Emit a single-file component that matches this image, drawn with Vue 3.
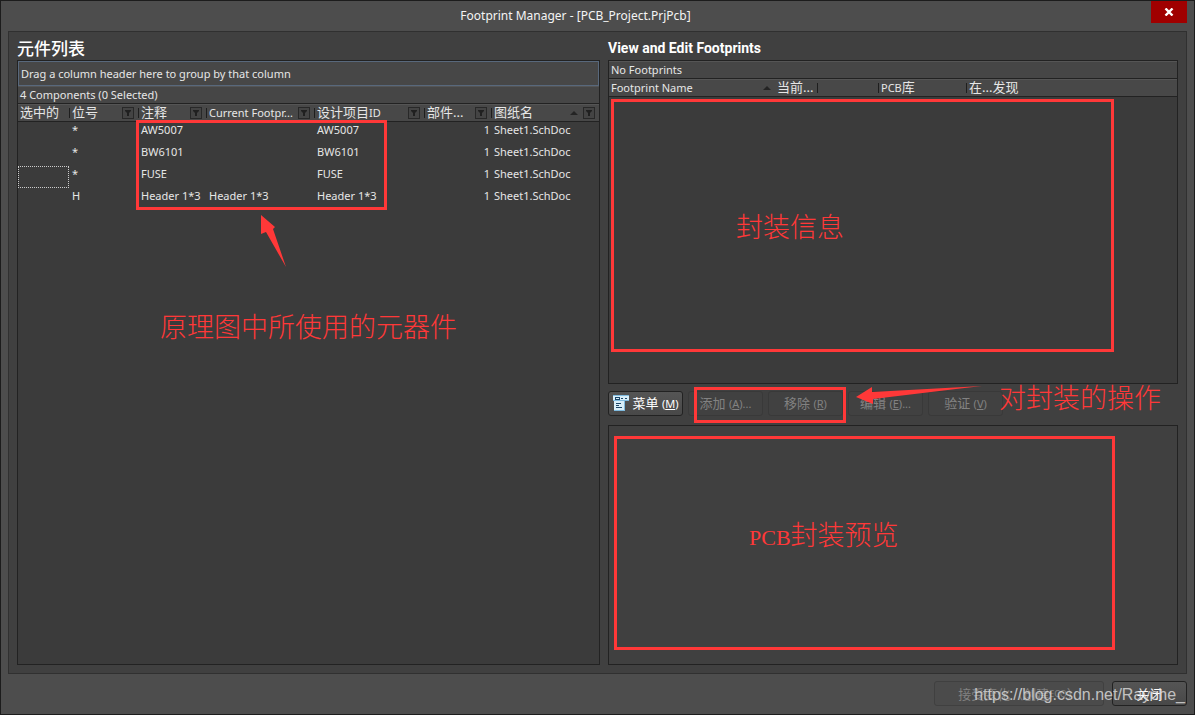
<script setup>
const columns = [
  { key: 'selected', label: '选中的' },
  { key: 'designator', label: '位号', filter: true },
  { key: 'comment', label: '注释', filter: true },
  { key: 'footprint', label: 'Current Footpr...', filter: true, latin: true },
  { key: 'item', label: '设计项目', suffix: 'ID', filter: true },
  { key: 'part', label: '部件...', filter: true },
  { key: 'sheet', label: '图纸名', filter: true, sorted: true }
]
const rows = [
  { selected: '', designator: '*', comment: 'AW5007', footprint: '', item: 'AW5007', part: '1', sheet: 'Sheet1.SchDoc' },
  { selected: '', designator: '*', comment: 'BW6101', footprint: '', item: 'BW6101', part: '1', sheet: 'Sheet1.SchDoc' },
  { selected: '', designator: '*', comment: 'FUSE', footprint: '', item: 'FUSE', part: '1', sheet: 'Sheet1.SchDoc' },
  { selected: '', designator: 'H', comment: 'Header 1*3', footprint: 'Header 1*3', item: 'Header 1*3', part: '1', sheet: 'Sheet1.SchDoc' }
]
const focusedRow = 2
const footprintColumns = [
  { key: 'name', label: 'Footprint Name', latin: true, sorted: true },
  { key: 'current', label: '当前...' },
  { key: 'blank', label: '' },
  { key: 'library', prefix: 'PCB', label: '库' },
  { key: 'found', label: '在...发现' }
]
const actions = [
  { label: '添加', letter: 'A', more: '...' },
  { label: '移除', letter: 'R', more: '' },
  { label: '编辑', letter: 'E', more: '...' },
  { label: '验证', letter: 'V', more: '' }
]
</script>

<template>
  <div class="window">
    <header class="titlebar">
      <h1>Footprint Manager - [PCB_Project.PrjPcb]</h1>
      <button class="close" type="button" aria-label="Close">
        <svg width="10" height="8" viewBox="0 0 10 8"><path d="M1.5 0.5 8.5 7.5M8.5 0.5 1.5 7.5" stroke="#fff" stroke-width="2.4" /></svg>
      </button>
    </header>

    <main class="body">
      <section class="column">
        <h2 class="cjk-title">元件列表</h2>
        <div class="box list">
          <div class="groupbar">Drag a column header here to group by that column</div>
          <div class="summary">4 Components (0 Selected)</div>
          <table>
            <colgroup><col v-for="c in columns" :key="c.key" :class="'c-' + c.key" /></colgroup>
            <thead>
              <tr>
                <th v-for="c in columns" :key="c.key" scope="col">
                  <div class="head">
                    <span class="label" :class="{ latin: c.latin }">{{ c.label }}<small v-if="c.suffix">{{ c.suffix }}</small></span>
                    <svg v-if="c.sorted" class="sort" width="8" height="4" viewBox="0 0 8 4"><path d="M0 4 4 0 8 4Z" fill="#242424" /></svg>
                    <button v-if="c.filter" class="filter" type="button" :aria-label="'Filter ' + c.label">
                      <svg width="6" height="6" viewBox="0 0 6 6"><path d="M0 0H6V1L4 3V6H2V3L0 1Z" fill="#202020" /></svg>
                    </button>
                  </div>
                </th>
              </tr>
            </thead>
            <tbody>
              <tr v-for="(row, i) in rows" :key="i">
                <td v-for="c in columns" :key="c.key" :class="{ right: c.key === 'part', focused: i === focusedRow && c.key === 'selected' }">{{ row[c.key] }}</td>
              </tr>
            </tbody>
          </table>
          <div class="mark mark-list"></div>
          <svg class="arrow arrow-list" width="26" height="54" viewBox="0 0 26 54"><path d="M0 0 14 12 12 14 25 52 5 17 0 19Z" fill="#ff3838" /></svg>
          <p class="note note-list">原理图中所使用的元器件</p>
        </div>
      </section>

      <section class="column">
        <h2>View and Edit Footprints</h2>
        <div class="box footprints">
          <div class="summary">No Footprints</div>
          <table>
            <colgroup><col v-for="c in footprintColumns" :key="c.key" :class="'f-' + c.key" /></colgroup>
            <thead>
              <tr>
                <th v-for="c in footprintColumns" :key="c.key" scope="col">
                  <div class="head">
                    <span class="label" :class="{ latin: c.latin }"><small v-if="c.prefix">{{ c.prefix }}</small>{{ c.label }}</span>
                    <svg v-if="c.sorted" class="sort" width="8" height="4" viewBox="0 0 8 4"><path d="M0 4 4 0 8 4Z" fill="#242424" /></svg>
                  </div>
                </th>
              </tr>
            </thead>
          </table>
          <div class="mark mark-info"></div>
          <p class="note note-info">封装信息</p>
        </div>
        <div class="toolbar">
          <button class="btn menu" type="button">
            <svg width="16" height="16" viewBox="0 0 16 16">
              <path d="M0 0H16V6H12V16H1V6H0Z" fill="#d8effa" />
              <path d="M0 5H16V6H12V16H11V6H0ZM1 15H12V16H1ZM0 0H16V1H0Z" fill="#7fbbe0" />
              <path d="M2 2H7V5H2ZM8 3H10V4H8ZM12 3H14V4H12Z" fill="#1c4668" />
              <path d="M3 3H6V4H3Z" fill="#d8effa" />
              <path d="M3 8H8V9H3ZM3 10H6V11H3ZM3 12H9V13H3Z" fill="#1c4668" />
            </svg>
            <span>菜单 <small>(<u>M</u>)</small></span>
          </button>
          <button v-for="a in actions" :key="a.letter" class="btn" type="button" disabled>
            <span>{{ a.label }} <small>(<u>{{ a.letter }}</u>){{ a.more }}</small></span>
          </button>
          <div class="mark mark-actions"></div>
          <svg class="arrow arrow-actions" width="127" height="20" viewBox="0 0 127 20"><path d="M0 11 16 1 16 6 126 0 100 3 17 13 17 18Z" fill="#ff3838" /></svg>
          <p class="note note-actions">对封装的操作</p>
        </div>
        <div class="box preview">
          <div class="mark mark-preview"></div>
          <p class="note note-preview"><span>PCB</span>封装预览</p>
        </div>
      </section>
    </main>

    <footer class="footer">
      <button class="btn accept" type="button" disabled>接受变化（创建<small>ECO</small>）</button>
      <button class="btn" type="button">关闭</button>
      <span class="watermark">https://blog.csdn.net/Rayche_</span>
    </footer>
  </div>
</template>

<style>
body { margin: 0; background: #4d4d4d; }
</style>

<style scoped>
* { box-sizing: border-box; }
.window {
  display: flex; flex-direction: column; min-height: 100vh;
  border: 1px solid #1c1c1c; background: #4d4d4d; color: #e6e6e6;
  font: 11px/16px "Noto Sans", "Noto Sans CJK SC", sans-serif;
}
h1, h2, p { margin: 0; }
button { font: inherit; color: inherit; padding: 0; }
.titlebar { position: relative; display: flex; justify-content: center; height: 30px; padding-right: 44px; }
h1 { font-size: 12px; font-weight: 400; line-height: 30px; color: #f4f4f4; }
.close {
  position: absolute; top: 0; right: 7px; width: 36px; height: 22px;
  display: flex; align-items: center; justify-content: center; border: 0; background: #a00000;
}
.body {
  flex: 1; display: grid; grid-template-columns: 583fr 570fr; gap: 8px;
  margin: 0 7px; padding: 0 8px 8px; border: 1px solid #303030; background: #404040;
}
.column { display: flex; flex-direction: column; min-width: 0; }
h2 { height: 28px; font: bold 14px/32px Roboto, sans-serif; color: #fff; }
.cjk-title { font: 500 17px/32px "Noto Sans CJK SC", sans-serif; }
.box { position: relative; border: 1px solid #222; }
.list { flex: 1; background: #3b3b3b; }
.footprints { flex: 324 1 0; background: #3b3b3b; }
.preview { flex: 240 1 0; background: #404040; }
.groupbar { height: 25px; padding: 0 2px; line-height: 24px; border: 1px solid #58687c; background: #474747; }
.summary { height: 17px; padding: 0 2px; border-top: 1px solid #555; background: #464646; }
table { width: 100%; table-layout: fixed; border-collapse: separate; border-spacing: 0; }
th, td { padding: 0; font-weight: 400; text-align: left; }
th { height: 19px; border: 1px solid #222; border-width: 1px 0; background: #484848; }
.head { display: flex; align-items: center; height: 17px; gap: 5px; padding-right: 4px; border-top: 1px solid #555; }
.head::before { content: ""; width: 1px; height: 10px; margin-right: -3px; background: #1e1e1e; }
th:first-child .head::before { width: 0; margin-right: -3px; }
.label { flex: 1; padding-bottom: 2px; font-size: 13px; line-height: 16px; white-space: nowrap; }
.latin { padding-bottom: 0; font-size: 11px; }
small { font-size: 11px; }
.sort { flex: none; }
.filter {
  flex: none; width: 12px; height: 12px; display: flex; align-items: center; justify-content: center;
  border: 1px solid #282828; background: #444;
}
td { height: 22px; padding: 0 3px; vertical-align: top; white-space: nowrap; }
td.right { padding: 0 1px; text-align: right; }
.focused { outline: 1px dotted #ccc; outline-offset: -1px; }
.c-selected { width: 51px; }
.c-designator { width: 69px; }
.c-comment { width: 68px; }
.c-footprint { width: 108px; }
.c-item { width: 110px; }
.c-part { width: 67px; }
.f-name { width: 166px; }
.f-current { width: 42px; }
.f-blank { width: 61px; }
.f-library { width: 88px; }
.toolbar { position: relative; display: flex; gap: 5px; padding: 7px 0 9px; }
.btn {
  display: flex; align-items: center; justify-content: center; gap: 4px; width: 75px; height: 25px;
  border: 1px solid #222; border-radius: 3px; background: linear-gradient(#555, #484848);
  font-size: 13px; white-space: nowrap; color: #fff;
}
.btn:disabled { border-color: #393939; background: #414141; color: #828282; }
.footer { position: relative; display: flex; justify-content: flex-end; gap: 8px; padding: 7px 7px 8px; }
.accept { gap: 0; width: 170px; }
.accept small { font-size: 9px; }
.footer .btn { line-height: 20px; }
.footer .btn:disabled { background: #4b4b4b; border-color: #404040; }
.mark { position: absolute; border: 3px solid #ff3838; }
.note { position: absolute; font: 300 27px/32px "Noto Sans CJK SC", sans-serif; color: #ff3838; white-space: nowrap; }
.note span { font: 22px/32px "Liberation Serif", serif; }
.arrow { position: absolute; }
.mark-list { left: 118px; top: 59px; width: 251px; height: 90px; }
.arrow-list { left: 243px; top: 154px; }
.note-list { left: 142px; top: 249px; }
.mark-info { left: 2px; top: 38px; right: 63px; bottom: 31px; }
.note-info { left: 127px; top: 149px; }
.mark-actions { left: 86px; top: 3px; width: 152px; height: 36px; }
.arrow-actions { left: 248px; top: 2px; }
.note-actions { left: 391px; top: -3px; }
.mark-preview { left: 5px; top: 10px; right: 62px; bottom: 14px; }
.note-preview { left: 140px; top: 92px; }
.watermark {
  position: absolute; right: 9px; bottom: 9px; font: 16px/20px "Liberation Sans", sans-serif;
  color: rgba(225, 225, 225, 0.8); pointer-events: none;
}
</style>
